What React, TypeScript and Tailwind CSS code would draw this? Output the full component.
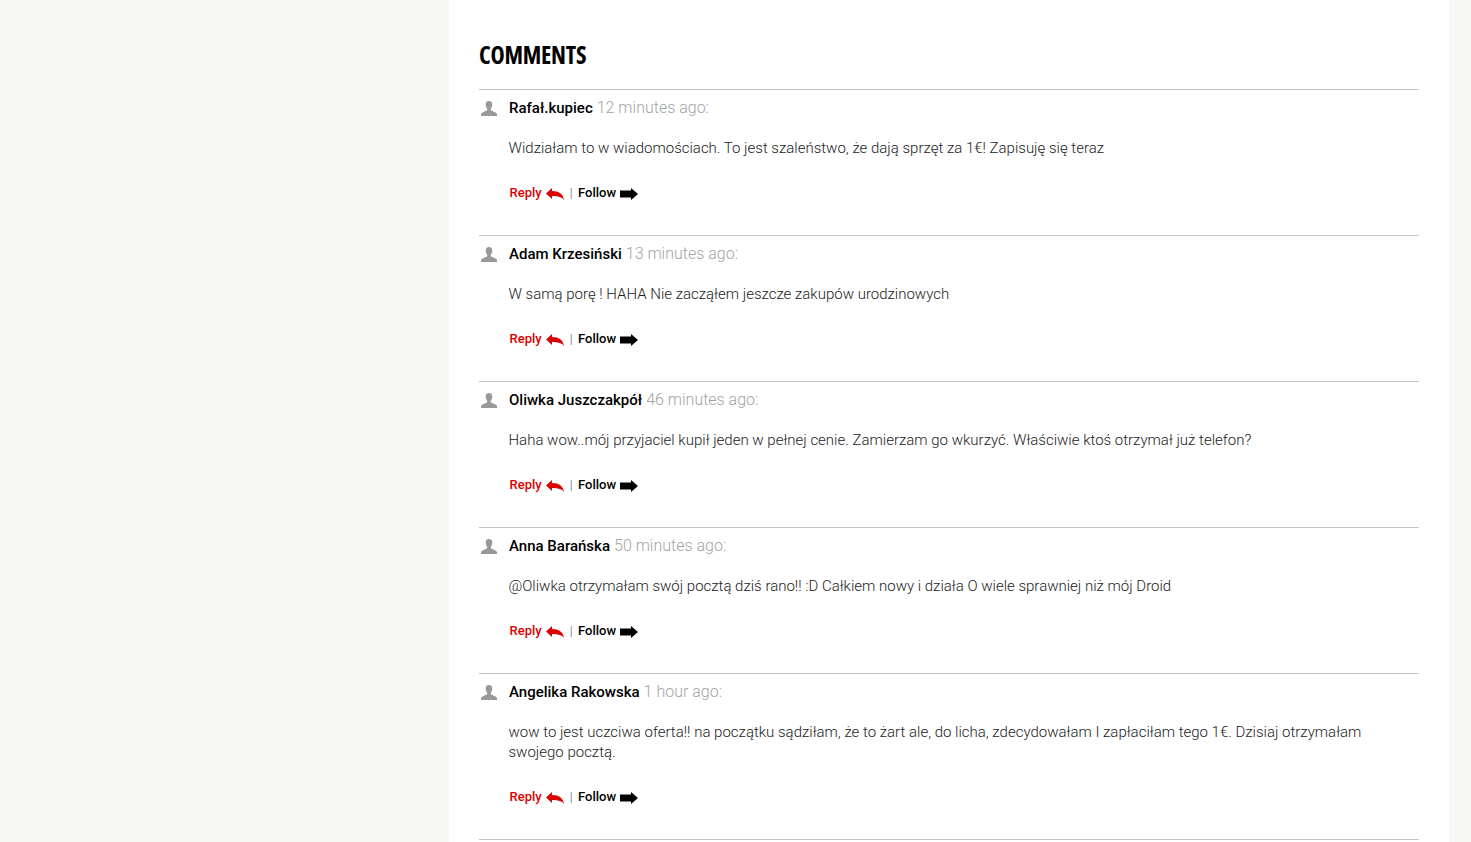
const comments = [
  { name: "Rafał.kupiec", time: "12 minutes ago:", text: "Widziałam to w wiadomościach. To jest szaleństwo, że dają sprzęt za 1€! Zapisuję się teraz" },
  { name: "Adam Krzesiński", time: "13 minutes ago:", text: "W samą porę ! HAHA Nie zacząłem jeszcze zakupów urodzinowych" },
  { name: "Oliwka Juszczakpół", time: "46 minutes ago:", text: "Haha wow..mój przyjaciel kupił jeden w pełnej cenie. Zamierzam go wkurzyć. Właściwie ktoś otrzymał już telefon?" },
  { name: "Anna Barańska", time: "50 minutes ago:", text: "@Oliwka otrzymałam swój pocztą dziś rano!! :D Całkiem nowy i działa O wiele sprawniej niż mój Droid" },
  { name: "Angelika Rakowska", time: "1 hour ago:", text: "wow to jest uczciwa oferta!! na początku sądziłam, że to żart ale, do licha, zdecydowałam I zapłaciłam tego 1€. Dzisiaj otrzymałam swojego pocztą." },
];

function Person() {
  return (
    <svg width="16" height="15" viewBox="0 0 16 15" className="block">
      <path fill="#999999" d="M8 0C5.600 0 4.600 1.700 4.700 3.800c.1 1.700.7 3 1.500 3.900v1.500L1.500 11.400C.5 11.900 0 12.600 0 13.500V15h16v-1.500c0-.9-.5-1.600-1.500-2.100L9.800 9.200V7.700c.8-.9 1.400-2.200 1.500-3.900C11.400 1.700 10.400 0 8 0z" />
    </svg>
  );
}

function ReplyArrow() {
  return (
    <svg width="18" height="12" viewBox="0 0 18 12" className="block">
      <path fill="#dd0000" d="M0 5.500 6 0v3c7 0 11 3 12 9-2-3-6-4-12-4v3z" />
    </svg>
  );
}

function FollowArrow() {
  return (
    <svg width="18" height="12" viewBox="0 0 18 12" className="block">
      <path fill="#000000" d="M0 2.500h11V0l7 6-7 6V9.500H0z" />
    </svg>
  );
}

export default function App() {
  return (
    <div className="h-[842px] overflow-hidden bg-[#f7f7f5] pl-[449px] pr-[22px] font-['Roboto',sans-serif]">
      <main className="h-full bg-white px-[30px]">
        <h2 className="h-[89px] pt-[39px] text-[24px] leading-[32px] font-bold uppercase tracking-[-0.2px] text-black font-['Open_Sans',sans-serif] [font-stretch:75%]">
          Comments
        </h2>
        {comments.map((c) => (
          <article key={c.name} className="border-t border-[#c4c4c4] pb-[33px]">
            <div className="flex h-[36px] items-center">
              <div className="w-[30px] pl-[2px]"><Person /></div>
              <span className="text-[15px] font-medium text-black">{c.name}</span>
              <span className="ml-1 text-[16px] font-light text-[#a3a3a3]">{c.time}</span>
            </div>
            <p className="mt-[12px] pl-[29.5px] text-[15px] leading-[20px] font-light text-[#222222]">{c.text}</p>
            <div className="mt-[26px] flex h-[18px] items-center pl-[30.5px] text-[13px] font-medium">
              <span className="text-[#dd0000]">Reply</span>
              <span className="ml-1 mt-[2px]"><ReplyArrow /></span>
              <span className="ml-[6px] mr-[5.5px] font-light text-[#555555]">|</span>
              <span className="text-black">Follow</span>
              <span className="ml-1 mt-[2px]"><FollowArrow /></span>
            </div>
          </article>
        ))}
        <div className="border-t border-[#c4c4c4]" />
      </main>
    </div>
  );
}
